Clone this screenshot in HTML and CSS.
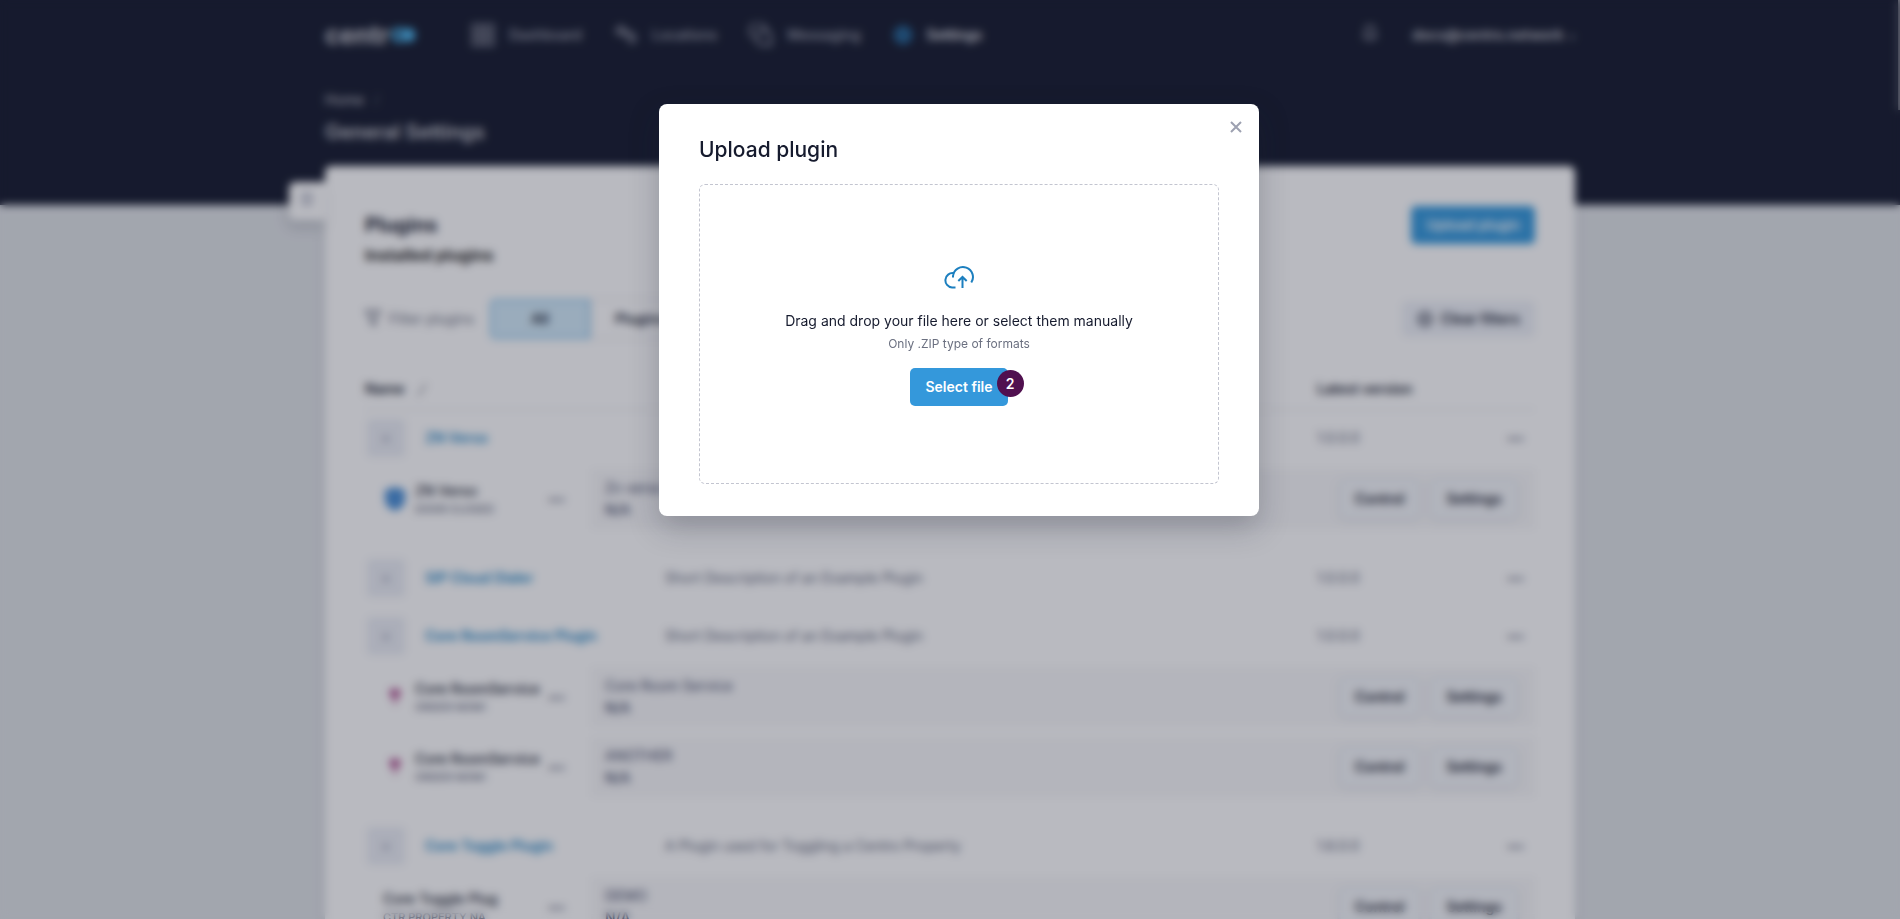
FILE: index.html
```html
<!DOCTYPE html>
<html lang="en">
<head>
  <meta charset="UTF-8" />
  <title>Centro - General Settings</title>
  <link rel="stylesheet" href="styles.css">
</head>
<body>
  <div class="page">
    <header class="header">
      <div class="container">
        <div class="topbar">
          <a href="#" class="logo">centr<svg width="27" height="16" viewBox="0 0 29 18"><circle cx="9" cy="9" r="6" fill="none" stroke="#4cb5ec" stroke-width="5" /><circle cx="20" cy="9" r="8" fill="#4cb5ec" /></svg></a>
          <nav class="nav">
            <a href="#"><svg width="24" height="24" viewBox="0 0 24 24"><path d="M2 2h8v8H2zM14 2h8v8h-8zM2 14h8v8H2zM14 14h8v8h-8z" /></svg>Dashboard</a>
            <a href="#"><svg width="24" height="24" viewBox="0 0 24 24"><path d="M2 8l5-5 5 5-5 4zM7 12v-2h9M13 14l5-4 4 5-4 5z" /></svg>Locations</a>
            <a href="#"><svg width="24" height="24" viewBox="0 0 24 24"><path d="M5 16L3 13a8 8 0 1 1 14-6M10 8h7q5 0 5 5v9h-8q-6 0-6-6z" /></svg>Messaging</a>
            <a href="#" class="active"><svg width="20" height="20" viewBox="0 0 24 24"><path d="M12 2l3 3h4v4l3 3-3 3v4h-4l-3 3-3-3H5v-4l-3-3 3-3V5h4z" /><circle cx="12" cy="12" r="3" /></svg>Settings</a>
          </nav>
          <button class="bell" aria-label="Notifications"><svg width="16" height="20" viewBox="0 0 18 20"><path d="M2 15h14l-2-3V7q0-5-5-5T4 7v5zM7 18h4" /></svg></button>
          <button class="account">docs@centro.network <svg width="6" height="5" viewBox="0 0 8 6"><path d="M1 1l3 3 3-3" /></svg></button>
        </div>
        <div class="crumbs"><a href="#">Home</a> <span>/</span></div>
        <h1>General Settings</h1>
      </div>
    </header>

    <main class="container card">
      <button class="side-toggle" aria-label="Open menu"><svg width="16" height="16" viewBox="0 0 16 16"><path d="M2 3h12M2 8h12M2 13h12" /></svg></button>

      <div class="card-head">
        <div>
          <h2>Plugins</h2>
          <h3>Installed plugins</h3>
        </div>
        <button class="btn-primary">Upload plugin</button>
      </div>

      <div class="filters">
        <span class="filter-label"><svg width="16" height="18" viewBox="0 0 16 18"><path d="M1 2h14L10 9v7l-4-2V9z" /></svg>Filter plugins</span>
        <div class="tabs">
          <button class="selected">All</button>
          <button>Plugins</button>
          <button>Services</button>
        </div>
        <button class="btn-clear"><svg width="16" height="16" viewBox="0 0 16 16"><circle cx="8" cy="8" r="6" /><path d="M6 6l4 4M10 6l-4 4" stroke-width="1" /></svg>Clear filters</button>
      </div>

      <table class="plugins">
        <colgroup><col class="c-sub"><col class="c-name"><col><col class="c-version"></colgroup>
        <thead>
          <tr><th colspan="2">Name <svg width="12" height="14" viewBox="0 0 12 14"><path d="M2 13l8-12" /></svg></th><th></th><th>Latest version</th></tr>
        </thead>
        <tbody>
          <tr>
            <td colspan="2"><div class="name"><button class="expand">+</button><a href="#">ZN Verso</a></div></td>
            <td></td>
            <td><div class="version">1.0.0.0<button class="dots">•••</button></div></td>
          </tr>
          <tr class="sub">
            <td><div class="service"><svg width="20" height="24" viewBox="0 0 20 24"><path fill="#4a8fd6" d="M10 0l10 3v10q0 7-10 11Q0 20 0 13V3z" /></svg><p>ZN Verso<small>DOOR CLOSED</small></p><button class="dots">•••</button></div></td>
            <td colspan="3"><div class="detail"><p>Zn verso<b>N/A</b></p><button>Control</button><button>Settings</button></div></td>
          </tr>
        </tbody>
        <tbody>
          <tr>
            <td colspan="2"><div class="name"><button class="expand">+</button><a href="#">SIP Cloud Dialer</a></div></td>
            <td>Short Description of an Example Plugin</td>
            <td><div class="version">1.0.0.0<button class="dots">•••</button></div></td>
          </tr>
        </tbody>
        <tbody>
          <tr>
            <td colspan="2"><div class="name"><button class="expand">+</button><a href="#">Core RoomService Plugin</a></div></td>
            <td>Short Description of an Example Plugin</td>
            <td><div class="version">1.0.0.0<button class="dots">•••</button></div></td>
          </tr>
          <tr class="sub">
            <td><div class="service"><svg width="20" height="24" viewBox="0 0 20 24"><path fill="#b04f90" d="M5 4h10v7l-4 3v6H9v-6l-4-3z" /></svg><p>Core RoomService<small>ORDER NOW!</small></p><button class="dots">•••</button></div></td>
            <td colspan="3"><div class="detail"><p>Core Room Service<b>N/A</b></p><button>Control</button><button>Settings</button></div></td>
          </tr>
          <tr class="sub">
            <td><div class="service"><svg width="20" height="24" viewBox="0 0 20 24"><path fill="#b04f90" d="M5 4h10v7l-4 3v6H9v-6l-4-3z" /></svg><p>Core RoomService<small>ORDER NOW!</small></p><button class="dots">•••</button></div></td>
            <td colspan="3"><div class="detail"><p>ANOTHER<b>N/A</b></p><button>Control</button><button>Settings</button></div></td>
          </tr>
        </tbody>
        <tbody>
          <tr>
            <td colspan="2"><div class="name"><button class="expand">+</button><a href="#">Core Toggle Plugin</a></div></td>
            <td>A Plugin used for Toggling a Centro Property</td>
            <td><div class="version">1.6.0.0<button class="dots">•••</button></div></td>
          </tr>
          <tr class="sub">
            <td><div class="service"><p>Core Toggle Plug<small>CTR PROPERTY NA</small></p><button class="dots">•••</button></div></td>
            <td colspan="3"><div class="detail"><p>DEMO<b>N/A</b></p><button>Control</button><button>Settings</button></div></td>
          </tr>
        </tbody>
      </table>
    </main>
    <div class="scroll-thumb"></div>
  </div>

  <div class="overlay">
    <div class="modal" role="dialog" aria-labelledby="modal-title">
      <button class="close" aria-label="Close"><svg width="12" height="12" viewBox="0 0 12 12"><path d="M1 1l10 10M11 1L1 11" /></svg></button>
      <h2 id="modal-title">Upload plugin</h2>
      <div class="dropzone">
        <svg class="cloud" width="32" height="24" viewBox="0 0 32 24"><path d="M12.500 22.500H9a7 7.200 0 1 1 1.500-14.300M10 12.500v-1.500a10 10 0 1 1 18.300 6.500M19.500 23V12.500M15.300 16l4.200-4 4.200 4" /></svg>
        <p>Drag and drop your file here or select them manually</p>
        <small>Only .ZIP type of formats</small>
        <div class="select-file">
          <button class="btn-primary">Select file</button>
          <span class="step">2</span>
        </div>
      </div>
    </div>
  </div>
</body>
</html>
```

FILE: styles.css
```css
* {
  box-sizing: border-box;
}
body {
  margin: 0;
  font-family: Inter, "Liberation Sans", sans-serif;
  font-size: 14px;
  line-height: 20px;
  color: #161b2e;
}
h1, h2, h3, p {
  margin: 0;
}
a {
  color: inherit;
  text-decoration: none;
}
button {
  font: inherit;
  color: inherit;
  background: none;
  border: 0;
  padding: 0;
  cursor: pointer;
}
svg {
  fill: none;
  stroke: currentColor;
  stroke-width: 2;
  flex-shrink: 0;
}
.page {
  position: relative;
  height: 100vh;
  overflow: hidden;
  background: #dfe2e6;
}
.container {
  max-width: 1250px;
  margin: 0 auto;
}

/* header */
.header {
  height: 205px;
  background: #161b2e;
  color: #a3a6b3;
}
.topbar {
  display: flex;
  align-items: center;
  height: 70px;
}
.logo {
  display: flex;
  align-items: center;
  width: 146px;
  font-size: 25px;
  font-weight: 700;
  color: #c8c9cf;
}
.logo svg {
  stroke-width: 0;
}
.nav {
  display: flex;
  gap: 32px;
  flex: 1;
}
.nav a {
  display: flex;
  align-items: center;
  gap: 14px;
  font-weight: 500;
}
.nav .active {
  color: #e4e5ea;
  font-weight: 600;
}
.nav .active svg {
  color: #2c88c8;
  stroke-width: 3;
}
.bell {
  margin-right: 34px;
}
.account {
  font-weight: 600;
  color: #c8c9cf;
}
.account svg {
  margin-left: 2px;
}
.crumbs {
  padding-top: 20px;
  color: #c8c9cf;
}
.crumbs span {
  margin-left: 6px;
  opacity: 0.4;
}
h1 {
  padding-top: 8px;
  font-size: 20px;
  font-weight: 600;
  line-height: 28px;
  color: #c8c9cf;
}

/* card */
.card {
  position: relative;
  margin-top: -39px;
  height: 900px;
  padding: 40px 40px 0;
  background: #fff;
  border-radius: 6px;
  box-shadow: 0 0 12px rgba(22, 27, 46, 0.1);
}
.side-toggle {
  position: absolute;
  top: 16px;
  left: -36px;
  width: 36px;
  height: 38px;
  background: #fff;
  border-radius: 6px 0 0 6px;
  box-shadow: -2px 8px 12px rgba(22, 27, 46, 0.15);
  color: #8d93a8;
}
.card-head {
  display: flex;
  justify-content: space-between;
  align-items: flex-start;
}
.card-head h2 {
  padding-top: 5px;
  font-size: 20px;
  line-height: 28px;
}
.card-head h3 {
  padding-top: 5px;
  font-size: 16px;
  font-weight: 700;
  line-height: 22px;
  color: #222;
}
.btn-primary {
  height: 38px;
  padding: 0 15px;
  background: #3498db;
  border-radius: 5px;
  color: #fff;
  font-weight: 600;
}
.filters {
  display: flex;
  align-items: center;
  padding: 33px 0 0;
}
.filter-label {
  display: flex;
  gap: 8px;
  width: 125px;
  color: #6b7080;
}
.tabs {
  display: flex;
  flex: 1;
}
.tabs button {
  width: 100px;
  height: 40px;
  border: 1px solid #d9dce4;
  font-weight: 600;
}
.tabs .selected {
  background: #d3ebf9;
  border: 2px solid #86c3ee;
  border-radius: 5px 0 0 5px;
}
.btn-clear {
  display: flex;
  align-items: center;
  gap: 8px;
  height: 36px;
  padding: 0 15px;
  background: #eef1f7;
  border-radius: 5px;
  font-weight: 600;
}

/* plugin list */
.plugins {
  width: 100%;
  margin-top: 30px;
  table-layout: fixed;
  border-collapse: collapse;
}
.c-sub {
  width: 226px;
}
.c-name {
  width: 74px;
}
.c-version {
  width: 218px;
}
.plugins th {
  height: 40px;
  padding: 0;
  border-bottom: 1px solid #e6e8ec;
  text-align: left;
  font-weight: 600;
}
.plugins th svg {
  margin-left: 8px;
  stroke-width: 1;
  vertical-align: middle;
}
.plugins td {
  height: 58px;
  padding: 0;
  color: #60667a;
}
.plugins .sub td {
  height: 70px;
  padding: 2px 0 8px;
}
.plugins .sub:last-child td {
  height: 82px;
  padding-bottom: 20px;
}
.name {
  display: flex;
  align-items: center;
  gap: 20px;
  color: #1f86c4;
  font-weight: 600;
}
.expand {
  width: 38px;
  height: 38px;
  margin-left: 2px;
  background: #ebeef5;
  border-radius: 4px;
  color: #8d93a8;
}
.version {
  display: flex;
  justify-content: space-between;
  padding-right: 11px;
}
.dots {
  font-size: 12px;
  font-weight: 700;
  line-height: 18px;
  color: #60667a;
}
.service {
  display: flex;
  align-items: center;
  height: 60px;
  padding: 0 26px 0 18px;
}
.service svg {
  margin-right: 10px;
  margin-left: 2px;
  stroke: none;
}
.service p {
  flex: 1;
  font-weight: 500;
  color: #161b2e;
}
.service small {
  display: block;
  font-size: 11px;
  font-weight: 500;
  line-height: 16px;
  color: #60667a;
}
.detail {
  display: flex;
  align-items: center;
  gap: 10px;
  height: 60px;
  padding: 0 17px 0 14px;
  background: #f8f8f9;
}
.detail p {
  flex: 1;
  line-height: 22px;
  color: #404766;
}
.detail b {
  display: block;
  font-weight: 500;
}
.detail button {
  height: 40px;
  padding: 0 14px;
  background: #f5f7fa;
  border: 2px solid #eef2f9;
  border-radius: 5px;
  box-shadow: 0 1px 6px rgba(22, 27, 46, 0.1);
  font-weight: 600;
  color: #161b2e;
}
.scroll-thumb {
  position: absolute;
  top: 0;
  right: 0;
  width: 2px;
  height: 110px;
  background: #9a9ca5;
}

/* upload dialog */
.overlay {
  position: fixed;
  inset: 0;
  display: flex;
  justify-content: center;
  align-items: flex-start;
  padding: 104px 0 0 18px;
  background: rgba(22, 27, 46, 0.3);
  backdrop-filter: blur(4px);
}
.modal {
  position: relative;
  width: 600px;
  padding: 32px 40px;
  background: #fff;
  border-radius: 8px;
  box-shadow: 0 12px 30px rgba(22, 27, 46, 0.25);
}
.modal h2 {
  margin-bottom: 20px;
  font-size: 21px;
  font-weight: 500;
  line-height: 28px;
}
.close {
  position: absolute;
  top: 14px;
  right: 17px;
  color: #9da1b1;
}
.dropzone {
  display: flex;
  flex-direction: column;
  align-items: center;
  justify-content: center;
  height: 300px;
  padding-top: 2px;
  border: 1px dashed #c3c5d0;
  border-radius: 6px;
}
.cloud {
  margin-bottom: 22px;
  color: #1c7fbf;
}
.dropzone small {
  margin: 3px 0 14px;
  font-size: 12px;
  color: #6b7080;
}
.select-file {
  position: relative;
}
.step {
  position: absolute;
  top: 2px;
  right: -16px;
  width: 27px;
  height: 27px;
  border-radius: 50%;
  background: #50104f;
  color: #fff;
  font-weight: 600;
  line-height: 27px;
  text-align: center;
}
```
